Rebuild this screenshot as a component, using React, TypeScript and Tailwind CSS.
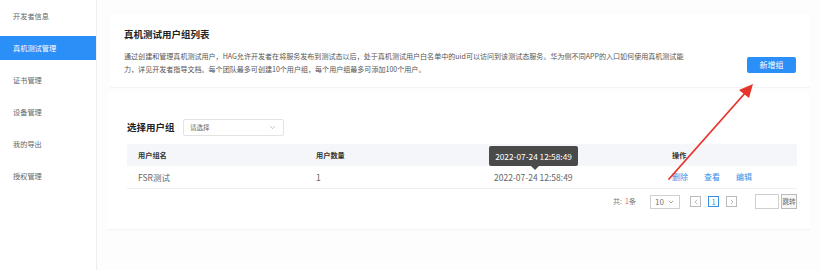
import { ChevronDown, ChevronLeft, ChevronRight } from 'lucide-react'

const menu = ['开发者信息', '真机测试管理', '证书管理', '设备管理', '我的导出', '授权管理']

export default function App() {
  return (
    <div
      className="relative flex w-[820px] h-[270px] overflow-hidden bg-white text-[#333]"
      style={{ fontFamily: '"Noto Sans CJK SC", "Noto Sans", sans-serif' }}
    >
      {/* Sidebar */}
      <aside className="w-[97px] shrink-0 border-r border-[#eeeeee] pt-[4px] flex flex-col gap-[8px]">
        {menu.map((item, i) => (
          <div
            key={item}
            className={
              'h-[24px] pl-[13px] flex items-center text-[7.2px] ' +
              (i === 1 ? 'bg-[#2a8ff7] text-white' : 'text-[#666]')
            }
          >
            {item}
          </div>
        ))}
      </aside>

      {/* Main */}
      <main className="flex-1 bg-[#fdfdfd] pt-[14px] pl-[13px] pr-[10px] flex flex-col gap-[4px]">
        {/* Intro card */}
        <section className="h-[74px] bg-white border-b border-[#f4f4f4] shadow-[0_0_2px_rgba(0,0,0,0.02)] pl-[14px] pr-[14px] pt-[14px] flex">
          <div className="w-[572px]">
            <h1 className="text-[9.5px] font-bold text-[#222] leading-[13px]">真机测试用户组列表</h1>
            <p className="mt-[9px] text-[7.05px] leading-[13px] text-[#555]">
              通过创建和管理真机测试用户，HAG允许开发者在将服务发布到测试态以后，处于真机测试用户白名单中的uid可以访问到该测试态服务。华为侧不同APP的入口如何使用真机测试能力，详见开发者指导文档。每个团队最多可创建10个用户组，每个用户组最多可添加100个用户。
            </p>
          </div>
          <div className="flex-1 flex justify-end pt-[29px]">
            <button className="h-[16px] w-[49px] rounded-[2px] bg-[#2a8ff7] text-white text-[8px] flex items-center justify-center">
              新增组
            </button>
          </div>
        </section>

        {/* Group card */}
        <section className="h-[138px] bg-white border-b border-[#f4f4f4] shadow-[0_0_2px_rgba(0,0,0,0.02)] pl-[20px] pr-[13px] pt-[27px] -ml-[3px]">
          <div className="flex items-center gap-[10px]">
            <h2 className="w-[46px] text-[9.5px] font-bold text-[#222] whitespace-nowrap">选择用户组</h2>
            <div className="w-[101px] h-[17px] border border-[#e3e3e3] rounded-[2px] flex items-center justify-between px-[6px]">
              <span className="text-[6.5px] text-[#666]">请选择</span>
              <ChevronDown className="w-[9px] h-[9px] text-[#999]" strokeWidth={1.5} />
            </div>
          </div>

          <div className="mt-[8px]">
            <div className="h-[22px] bg-[#f4f6f9] grid grid-cols-[178px_178px_178px_1fr] items-center pl-[11px] text-[7.2px] font-bold text-[#333]">
              <span>用户组名</span>
              <span>用户数量</span>
              <span></span>
              <span>操作</span>
            </div>
            <div className="h-[23px] border-b border-[#eeeeee] grid grid-cols-[178px_178px_178px_1fr] items-center pl-[11px] text-[8.5px] text-[#666]">
              <span>FSR测试</span>
              <span>1</span>
              <span>2022-07-24 12:58:49</span>
              <span className="flex gap-[16px] text-[#3a8ee6] text-[8px]">
                <span>删除</span>
                <span>查看</span>
                <span>编辑</span>
              </span>
            </div>
          </div>

          {/* Pagination */}
          <div className="mt-[5px] flex items-center justify-end text-[7px] text-[#777]">
            <span className="whitespace-pre">
              共:  <span className="text-[#f5576c]">1</span>条
            </span>
            <div className="ml-[14px] w-[30px] h-[14px] border border-[#cfcfcf] flex items-center justify-between px-[4px] text-[8px]">
              <span>10</span>
              <ChevronDown className="w-[8px] h-[8px]" strokeWidth={2} />
            </div>
            <div className="ml-[10px] w-[11px] h-[11px] border border-[#bbb] flex items-center justify-center">
              <ChevronLeft className="w-[8px] h-[8px]" strokeWidth={1.5} />
            </div>
            <div className="ml-[7px] w-[11px] h-[11px] border border-[#3a8ee6] text-[#3a8ee6] flex items-center justify-center text-[7.5px]">
              1
            </div>
            <div className="ml-[7px] w-[11px] h-[11px] border border-[#bbb] flex items-center justify-center">
              <ChevronRight className="w-[8px] h-[8px]" strokeWidth={1.5} />
            </div>
            <div className="ml-[18px] w-[24px] h-[15px] border border-[#cfcfcf]" />
            <div className="ml-[2px] w-[16px] h-[15px] border border-[#bbb] bg-[#f7f7f7] flex items-center justify-center text-[6.5px] text-[#666]">
              跳转
            </div>
          </div>
        </section>
      </main>

      {/* Tooltip */}
      <div className="absolute left-[489px] top-[146px] w-[89px] h-[20px] rounded-[2px] bg-[#4a4a4a] text-white text-[8.3px] flex items-center justify-center">
        2022-07-24 12:58:49
        <div className="absolute left-[42px] -bottom-[4px] w-0 h-0 border-l-[4px] border-r-[4px] border-t-[4px] border-l-transparent border-r-transparent border-t-[#4a4a4a]" />
      </div>

      {/* Red annotation arrow */}
      <svg className="absolute left-0 top-0 pointer-events-none" width="820" height="270">
        <line x1="669" y1="179" x2="746" y2="92" stroke="#e8352b" strokeWidth="1.8" strokeLinecap="round" />
        <polygon points="753,84 749,98 739,90" fill="#e8352b" />
      </svg>
    </div>
  )
}
